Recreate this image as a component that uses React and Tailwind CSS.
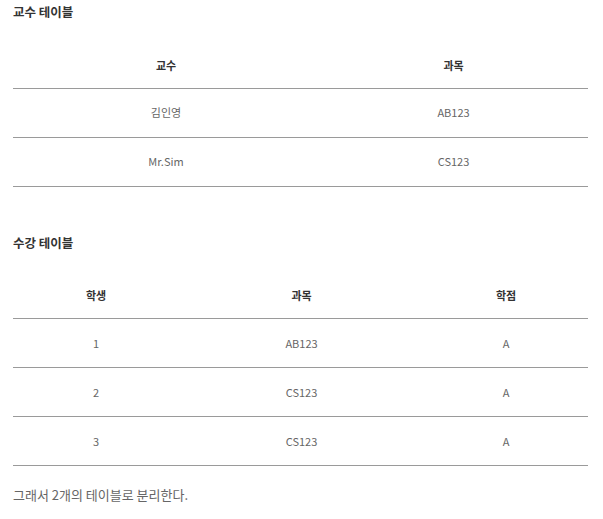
const font = { fontFamily: '"Noto Sans CJK KR", "Noto Sans", sans-serif' };

function Table({ cols, headers, rows }) {
  return (
    <table className="mt-4 w-[575px] table-fixed border-collapse">
      <colgroup>
        {cols.map((w, i) => (
          <col key={i} className={w} />
        ))}
      </colgroup>
      <thead>
        <tr className="h-[48px] border-b border-[#9a9a9a]">
          {headers.map((h) => (
            <th key={h} className="p-0 pt-[2px] text-center align-middle text-[11px] font-semibold text-[#333]">
              {h}
            </th>
          ))}
        </tr>
      </thead>
      <tbody>
        {rows.map((r, i) => (
          <tr key={i} className="h-[49px] border-b border-[#9a9a9a]">
            {r.map((c, j) => (
              <td key={j} className="p-0 text-center align-middle text-[11px] text-[#666]">
                {c}
              </td>
            ))}
          </tr>
        ))}
      </tbody>
    </table>
  );
}

export default function App() {
  return (
    <div className="min-h-screen bg-white px-[13px]" style={font}>
      {/* 교수 테이블 */}
      <h2 className="h-6 text-[12.5px] font-bold leading-6 text-[#333]">교수 테이블</h2>
      <Table
        cols={["w-[306px]", "w-[269px]"]}
        headers={["교수", "과목"]}
        rows={[
          ["김인영", "AB123"],
          ["Mr.Sim", "CS123"],
        ]}
      />

      {/* 수강 테이블 */}
      <h2 className="mt-[44px] h-6 text-[12.5px] font-bold leading-6 text-[#333]">수강 테이블</h2>
      <Table
        cols={["w-[166px]", "w-[245px]", "w-[164px]"]}
        headers={["학생", "과목", "학점"]}
        rows={[
          ["1", "AB123", "A"],
          ["2", "CS123", "A"],
          ["3", "CS123", "A"],
        ]}
      />

      <p className="mt-[17px] h-6 text-[13px] leading-6 text-[#666]">그래서 2개의 테이블로 분리한다.</p>
    </div>
  );
}
